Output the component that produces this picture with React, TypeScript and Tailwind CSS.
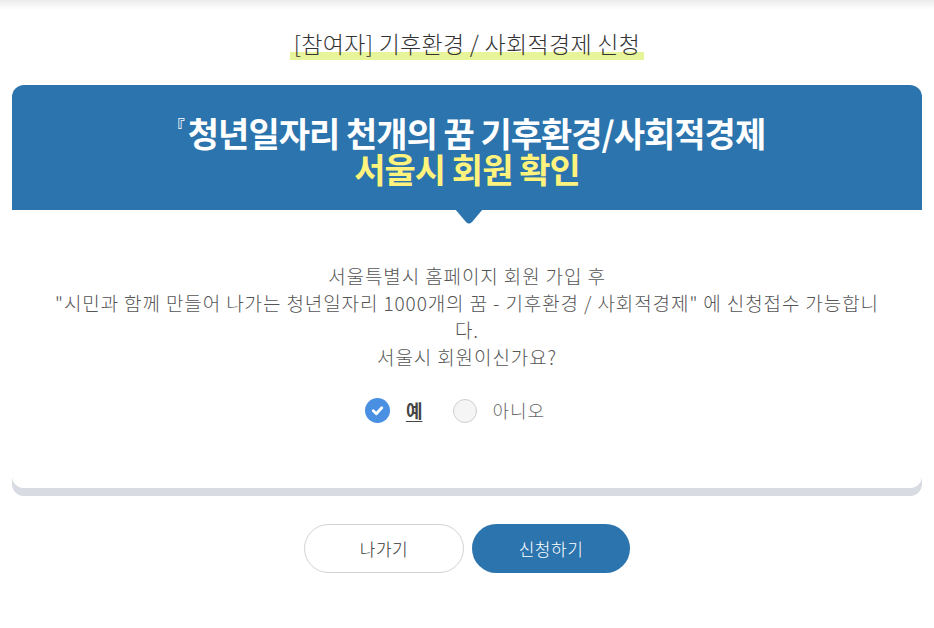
import React from "react";

const font = { fontFamily: '"Noto Sans CJK KR", "Noto Sans", sans-serif' };

export default function App() {
  return (
    <div className="w-[934px] h-[628px] bg-white relative overflow-hidden" style={font}>
      <div className="h-[10px] bg-gradient-to-b from-[#ececec] to-white" />
      <div className="flex justify-center mt-[17px]">
        <div className="relative px-[4px]">
          <div className="absolute left-0 right-0 top-[25px] h-[8px] bg-[#e8f49a]" />
          <h1 className="relative text-[23px] leading-[32px] font-light text-[#333] tracking-[0.3px]">
            [참여자] 기후환경 / 사회적경제 신청
          </h1>
        </div>
      </div>

      <div className="mx-[12px] mt-[26px] rounded-[12px] bg-white shadow-[0_8px_0_#d8dbe2]">
        <div className="relative bg-[#2b74ad] rounded-t-[12px] h-[125px] flex flex-col items-center justify-center pt-[6px]">
          <div className="text-white font-bold text-[34px] leading-[36px] tracking-[-1px] flex items-start">
            <span className="text-[16px] leading-[16px] mt-[2px] mr-[4px]">『</span>
            <span>청년일자리 천개의 꿈 기후환경/사회적경제</span>
          </div>
          <div className="text-[#fff37d] font-bold text-[34px] leading-[36px] tracking-[-1px]">서울시 회원 확인</div>
          <svg className="absolute left-[443px] top-[124px]" width="28" height="16" viewBox="0 0 28 16">
            <path d="M0 0 H28 L17 13 Q14 16 11 13 Z" fill="#2b74ad" />
          </svg>
        </div>
        <div className="px-[28px] pt-[52px] pb-[64px] text-center text-[19px] leading-[27px] tracking-[0.9px] text-[#555] font-light">
          <p>서울특별시 홈페이지 회원 가입 후</p>
          <p>
            "시민과 함께 만들어 나가는 청년일자리 1000개의 꿈 - 기후환경 / 사회적경제" 에 신청접수 가능합니
            <br />다.
          </p>
          <p>서울시 회원이신가요?</p>
          <div className="flex justify-center items-center mt-[27px] mr-[24px] tracking-normal">
            <span className="w-[25px] h-[25px] rounded-full bg-[#4a90e2] flex items-center justify-center">
              <svg width="15" height="15" viewBox="0 0 14 14">
                <path d="M3 7.3 L5.9 10 L11 4.4" fill="none" stroke="white" strokeWidth="2.6" strokeLinecap="round" strokeLinejoin="round" />
              </svg>
            </span>
            <span className="ml-[16px] text-[18px] font-bold text-[#444] underline underline-offset-[3px]">예</span>
            <span className="ml-[31px] w-[24px] h-[24px] rounded-full bg-[#f5f5f5] border border-[#cfcfcf]" />
            <span className="ml-[15px] text-[18px] text-[#666] font-light tracking-[1px]">아니오</span>
          </div>
        </div>
      </div>

      <div className="flex justify-center gap-[8px] mt-[36px]">
        <button className="w-[160px] h-[49px] rounded-full border border-[#d2d2d2] bg-white text-[17px] text-[#333] font-light tracking-[0.5px]">나가기</button>
        <button className="w-[158px] h-[49px] rounded-full bg-[#2b74ad] text-[17px] text-white font-light tracking-[0.5px]">신청하기</button>
      </div>
    </div>
  );
}
